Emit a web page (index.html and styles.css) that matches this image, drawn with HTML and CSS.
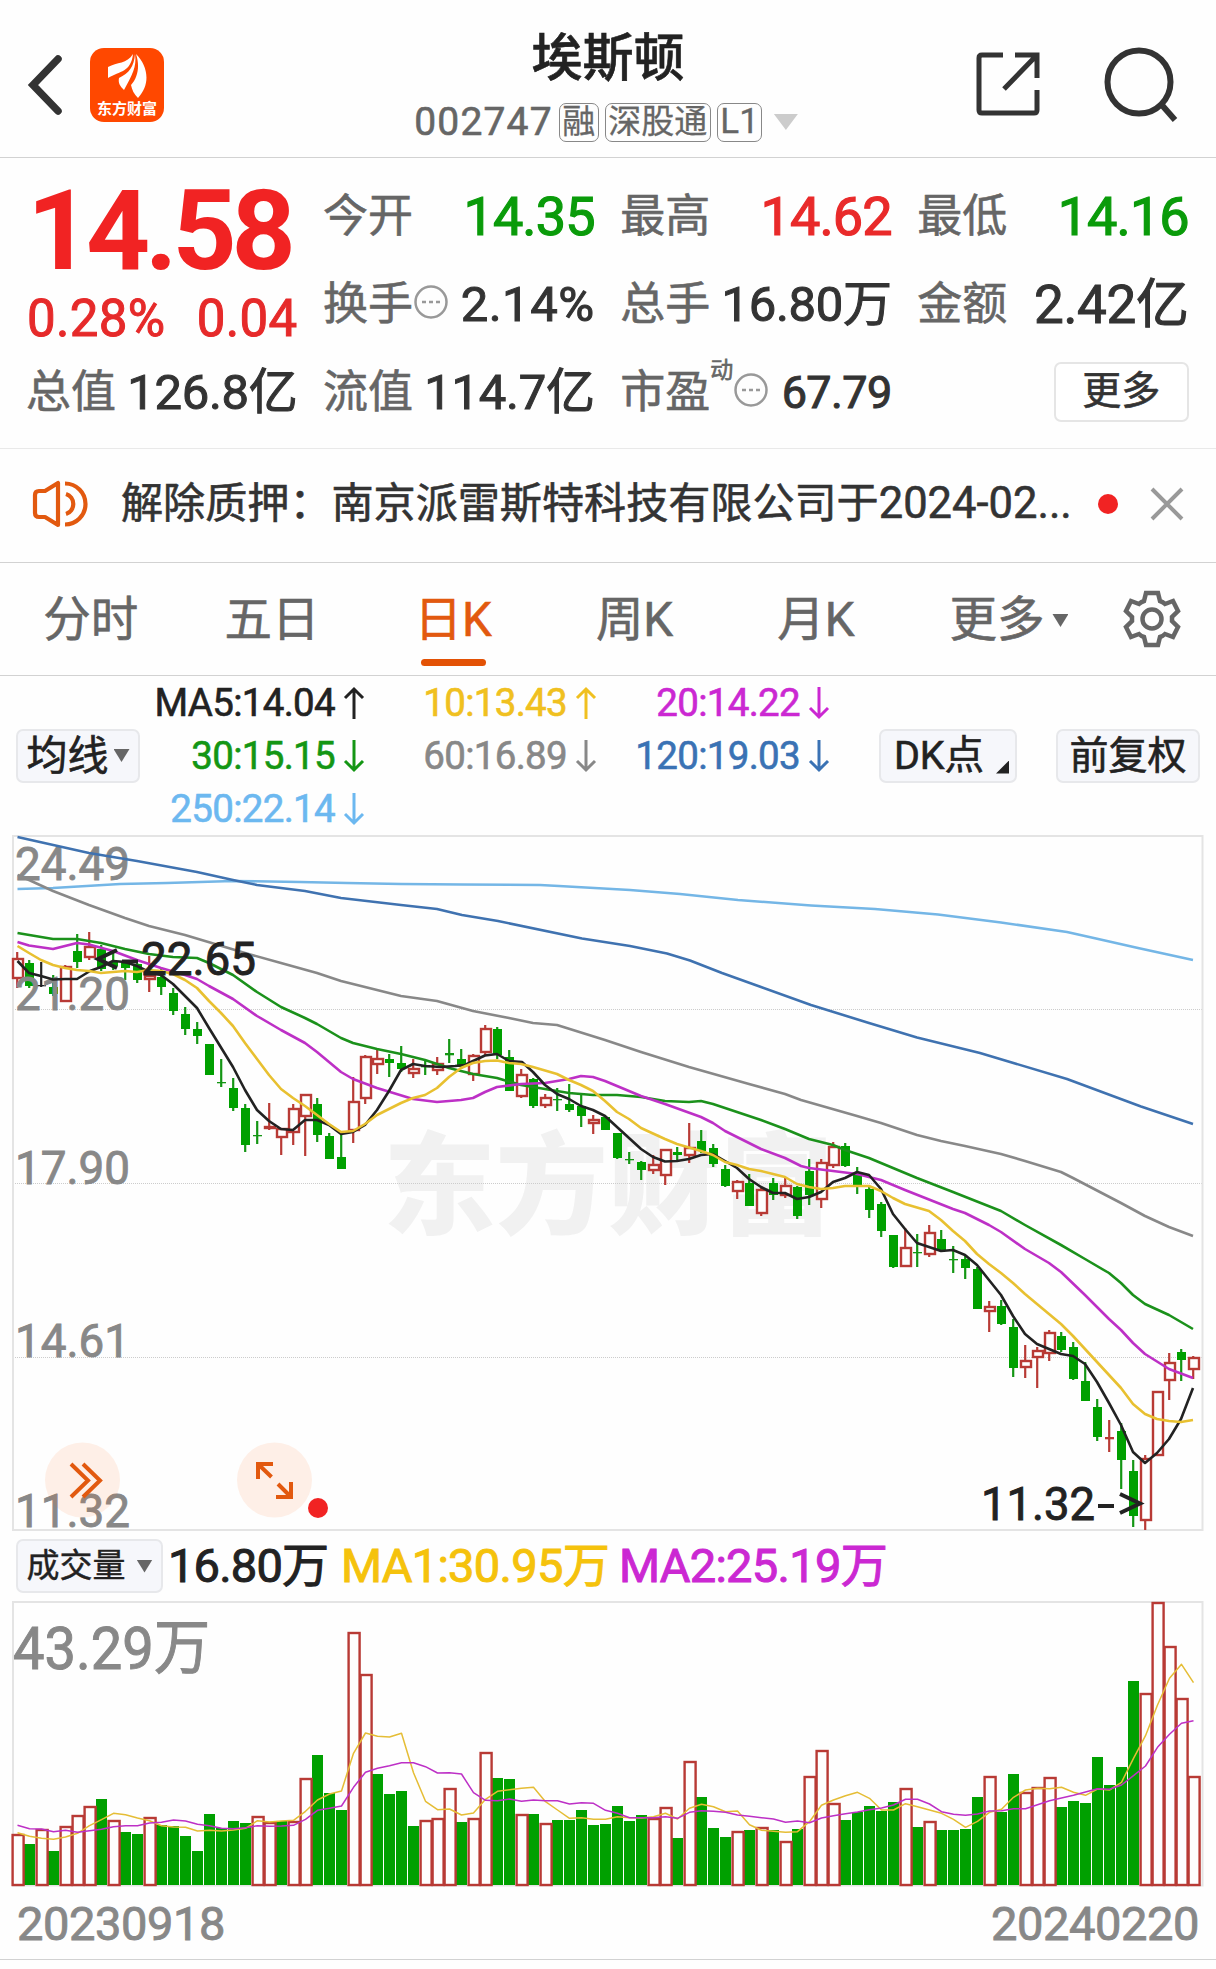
FILE: index.html
```html
<!DOCTYPE html>
<html lang="zh-CN">
<head>
<meta charset="utf-8">
<title>埃斯顿 002747</title>
<link rel="stylesheet" href="styles.css">
</head>
<body>
<header class="header">
  <div class="header-left">
    <svg class="back" width="40" height="64" viewBox="0 0 40 64"><path d="M34 6 9 32 34 58" fill="none" stroke="#333" stroke-width="7.5" stroke-linecap="round"/></svg>
    <div class="logo">
      <svg width="44" height="46" viewBox="0 0 44 46" fill="#fff"><path d="M3 15C12 10 22 12 28 2 26 20 15 19 3 26Z"/><path d="M30 2C32 15 27 23 19 38 15 34 13 31 14 26 24 21 29 15 30 2Z"/><path d="M31 2C43 14 46 32 33 46 29 42 27 38 26 33 33 25 35 14 31 2Z"/></svg>
      <span>东方财富</span>
    </div>
  </div>
  <div class="title">
    <h1>埃斯顿</h1>
    <div class="subtitle"><span class="code">002747</span><span class="tag">融</span><span class="tag">深股通</span><span class="tag tag-l1">L1</span><i class="caret"></i></div>
  </div>
  <div class="header-right">
    <svg width="66" height="66" viewBox="0 0 66 66" fill="none" stroke="#333" stroke-width="5"><path d="M28 4H7Q4 4 4 7V59Q4 62 7 62H59Q62 62 62 59V39M40 4H62V27M62 4 29 38"/></svg>
    <svg width="78" height="78" viewBox="0 0 78 78" fill="none" stroke="#333" stroke-width="6"><circle cx="38" cy="37" r="31.5"/><path d="M60 59 74 75"/></svg>
  </div>
</header>

<section class="quote">
  <div class="price-block">
    <div class="price">14.58</div>
    <div class="change"><span>0.28%</span><span>0.04</span></div>
  </div>
  <div class="stat"><span class="label">今开</span><span class="value down">14.35</span></div>
  <div class="stat"><span class="label">最高</span><span class="value up">14.62</span></div>
  <div class="stat"><span class="label">最低</span><span class="value down">14.16</span></div>
  <div class="stat"><span class="label">换手</span><svg class="info" width="34" height="34" viewBox="0 0 34 34"><circle cx="17" cy="17" r="15.5"/><path d="M8 17h4M15 17h4M22 17h4"/></svg><span class="value percent">2.14%</span></div>
  <div class="stat"><span class="label">总手</span><span class="value">16.80万</span></div>
  <div class="stat"><span class="label">金额</span><span class="value wide">2.42亿</span></div>
  <div class="stat"><span class="label">总值</span><span class="value">126.8亿</span></div>
  <div class="stat"><span class="label">流值</span><span class="value">114.7亿</span></div>
  <div class="stat pe"><span class="label">市盈</span><sup>动</sup><svg class="info" width="34" height="34" viewBox="0 0 34 34"><circle cx="17" cy="17" r="15.5"/><path d="M8 17h4M15 17h4M22 17h4"/></svg><span class="value small">67.79</span></div>
  <div class="stat"><button class="more">更多</button></div>
</section>

<section class="notice">
  <svg width="60" height="52" viewBox="0 0 60 52" fill="none" stroke="#e2590f" stroke-width="4.200" stroke-linejoin="round"><path d="M6 17Q6 13 10 13H16L29 5V47L16 39H10Q6 39 6 35Z"/><path d="M37 16A10.500 10.500 0 0 1 37 36M36 5.500A20.500 20.500 0 0 1 36 46.500"/></svg>
  <p>解除质押：南京派雷斯特科技有限公司于<span>2024<b>-</b>02...</span></p>
  <i class="dot"></i>
  <svg width="36" height="36" viewBox="0 0 36 36" stroke="#999" stroke-width="4"><path d="M3 3 33 33M33 3 3 33"/></svg>
</section>

<nav class="tabs">
  <a>分时</a><a>五日</a><a class="active">日K</a><a>周K</a><a>月K</a>
  <a class="tab-more">更多<i class="caret"></i></a>
  <svg class="gear" width="60" height="60" viewBox="0 0 60 60" fill="none" stroke="#666" stroke-width="4.500"><path d="M24 4H36L38 12Q41 13 43 15L51 12 56 22 50 28V32L56 38 51 48 43 45Q41 47 38 48L36 56H24L22 48Q19 47 17 45L9 48 4 38 10 32V28L4 22 9 12 17 15Q19 13 22 12Z"/><circle cx="30" cy="30" r="9.500"/></svg>
</nav>

<section class="averages">
  <button class="chip">均线<i class="caret"></i></button>
  <div class="ma-grid">
    <span class="ma5">MA5:14.04<svg viewBox="0 0 22 34"><path d="M11 33V3M2 12 11 3 20 12"/></svg></span>
    <span class="ma10">10:13.43<svg viewBox="0 0 22 34"><path d="M11 33V3M2 12 11 3 20 12"/></svg></span>
    <span class="ma20">20:14.22<svg viewBox="0 0 22 34"><path d="M11 1V31M2 22 11 31 20 22"/></svg></span>
    <span class="ma30">30:15.15<svg viewBox="0 0 22 34"><path d="M11 1V31M2 22 11 31 20 22"/></svg></span>
    <span class="ma60">60:16.89<svg viewBox="0 0 22 34"><path d="M11 1V31M2 22 11 31 20 22"/></svg></span>
    <span class="ma120">120:19.03<svg viewBox="0 0 22 34"><path d="M11 1V31M2 22 11 31 20 22"/></svg></span>
    <span class="ma250">250:22.14<svg viewBox="0 0 22 34"><path d="M11 1V31M2 22 11 31 20 22"/></svg></span>
  </div>
  <button class="chip chip-dk">DK点<i class="corner"></i></button>
  <button class="chip chip-fq">前复权</button>
</section>

<svg class="kline" width="1216" height="698" viewBox="0 834 1216 698">
  <g class="watermark"><text x="383" y="1226" textLength="450" lengthAdjust="spacingAndGlyphs">东方财富</text></g>
  <path class="grid" d="M13 1009.500H1202M13 1183.500H1202M13 1357.500H1202"/>
  <rect class="frame" x="13" y="836" width="1189.500" height="694"/>
  <g id="candles"></g>
  <g class="axis">
    <text x="15" y="880" textLength="115" lengthAdjust="spacingAndGlyphs">24.49</text>
    <text x="15" y="1010" textLength="115" lengthAdjust="spacingAndGlyphs">21.20</text>
    <text x="15" y="1184" textLength="115" lengthAdjust="spacingAndGlyphs">17.90</text>
    <text x="15" y="1357" textLength="115" lengthAdjust="spacingAndGlyphs">14.61</text>
    <text x="15" y="1527" textLength="115" lengthAdjust="spacingAndGlyphs">11.32</text>
  </g>
  <g id="lines"></g>
  <g class="fab">
    <circle cx="82.500" cy="1480" r="37.500"/><circle cx="274.500" cy="1480" r="37.500"/>
    <path d="M71 1464 88 1480.500 71 1497M83 1464 100 1480.500 83 1497M271.500 1477 258 1464M258 1479V1464H273M278 1484 291 1497M291 1482V1497H276"/>
  </g>
  <circle cx="318" cy="1508" r="10" fill="#f12323"/>
  <g class="mark">
    <path d="M117 950 98 959 117 968M122 961.500H138M1120 1494 1140 1503.500 1120 1513M1098 1506H1114"/>
    <text x="141" y="975" textLength="115" lengthAdjust="spacingAndGlyphs">22.65</text>
    <text x="981" y="1520" textLength="114" lengthAdjust="spacingAndGlyphs">11.32</text>
  </g>
</svg>

<section class="volume-bar">
  <button class="chip">成交量<i class="caret"></i></button>
  <span class="vol-now">16.80万</span><span class="vol-ma1">MA1:30.95万</span><span class="vol-ma2">MA2:25.19万</span>
</section>

<svg class="volume" width="1216" height="288" viewBox="0 1600 1216 288">
  <rect class="frame" x="13" y="1602" width="1189.500" height="283.500"/>
  <text class="vol-max" x="13" y="1669" textLength="197" lengthAdjust="spacingAndGlyphs">43.29万</text>
  <g id="bars"></g>
</svg>

<footer class="dates"><span>20230918</span><span>20240220</span></footer>
<script src="chart.js"></script>
</body>
</html>
```
FILE: styles.css
```css
* { box-sizing: border-box; }
body {
  margin: 0;
  width: 1216px;
  height: 1969px;
  overflow: hidden;
  background: #fefefe;
  color: #333;
  font-family: Roboto, "Noto Sans CJK SC", sans-serif;
  -webkit-text-stroke: .6px currentColor;
}
button { font: inherit; color: inherit; margin: 0; padding: 0; }
svg { flex: none; display: block; }

.caret {
  display: inline-block;
  width: 16px;
  height: 13px;
  background: #666;
  clip-path: polygon(0 0, 100% 0, 50% 100%);
}

/* Header */
.header {
  height: 158px;
  border-bottom: 1px solid #d2d2d2;
  display: grid;
  grid-template-columns: 400px 1fr 400px;
}
.header-left { display: flex; align-items: center; padding: 12px 0 0 24px; gap: 26px; }
.logo {
  width: 74px;
  height: 74px;
  border-radius: 14px;
  background: #ff4800;
  display: flex;
  flex-direction: column;
  align-items: center;
  padding-top: 4px;
}
.logo span { color: #fff; font-size: 15px; font-weight: 700; line-height: 18px; margin-top: 2px; white-space: nowrap; -webkit-text-stroke: 0; }
.title { display: flex; flex-direction: column; align-items: center; padding-top: 27px; }
.title h1 { margin: 0; font-size: 51px; line-height: 64px; font-weight: 500; color: #222; }
.subtitle { display: flex; align-items: center; margin: 11px 0 0 -4px; color: #666; white-space: nowrap; }
.code { font-size: 39px; line-height: 40px; letter-spacing: 1.2px; margin-right: 6px; }
.tag {
  height: 39px;
  border: 1.500px solid #888;
  border-radius: 7px;
  font-size: 33px;
  line-height: 35px;
  padding: 0 2.500px;
  margin-right: 6px;
  -webkit-text-stroke: .3px;
}
.tag-l1 { width: 45px; text-align: center; font-size: 35px; }
.subtitle .caret { width: 24px; height: 16px; background: #ccc; margin-left: 6px; }
.header-right { display: flex; justify-content: flex-end; align-items: center; gap: 60px; padding: 10px 37px 0 0; }

/* Quote */
.quote {
  height: 291px;
  border-bottom: 1px solid #e9e9e9;
  padding: 15px 27px 0;
  display: grid;
  grid-template-columns: repeat(4, 270.500px);
  grid-template-rows: repeat(3, 88px);
  column-gap: 26.600px;
}
.price-block { grid-row: span 2; color: #f12323; }
.price { font-size: 112px; font-weight: 700; line-height: 116px; letter-spacing: -5.200px; -webkit-text-stroke: 0; }
.change { display: flex; justify-content: space-between; font-size: 51px; line-height: 60px; color: #e62a2a; letter-spacing: .3px; -webkit-text-stroke: 1px; }
.stat { display: flex; align-items: center; white-space: nowrap; }
.label { font-size: 45px; line-height: 60px; color: #666; margin-left: -1px; }
.value { margin-left: auto; font-size: 49px; line-height: 60px; letter-spacing: -.3px; -webkit-text-stroke: 1px; }
.value.up, .value.down { font-size: 54px; letter-spacing: -.9px; -webkit-text-stroke: 1.200px; }
.value.percent { letter-spacing: .5px; }
.value.wide { font-size: 53px; }
.value.small { font-size: 45px; letter-spacing: -.6px; }
.up { color: #e92a2a; }
.down { color: #0a9b0a; }
.info { fill: none; stroke: #999; stroke-width: 2.500; margin: -6px 0 0 1px; }
.pe sup { font-size: 23px; line-height: 24px; color: #666; align-self: flex-start; margin: 10px 0 0; }
.more {
  margin: -2px 0 0 auto;
  width: 135px;
  height: 60px;
  border: 2px solid #e5e5e5;
  border-radius: 7px;
  background: #fff;
  font-size: 39px;
  line-height: 50px;
  padding-bottom: 3px;
}

/* Notice */
.notice { height: 114px; border-bottom: 1px solid #d2d2d2; display: flex; align-items: center; padding: 0 29px 3px 29px; }
.notice p { margin: 0 0 0 32px; width: 965px; font-size: 42.100px; line-height: 60px; white-space: nowrap; }
.notice p span { font-size: 43.500px; }
.notice b { font-weight: 400; }
.dot { width: 20px; height: 20px; border-radius: 50%; background: #f12323; margin: 0 31px 0 12px; }

/* Period tabs */
.tabs { height: 113px; border-bottom: 1px solid #d2d2d2; display: flex; align-items: center; color: #666; }
.tabs a { width: 181.300px; height: 112px; text-align: center; font-size: 47.500px; line-height: 114px; position: relative; }
.tabs .active { color: #e2590f; }
.active::after { content: ""; position: absolute; left: 58px; bottom: 9px; width: 65px; height: 7px; border-radius: 4px; background: #e35205; }
.tabs .tab-more { width: 216px; text-align: left; padding-left: 43px; }
.tab-more .caret { margin: 0 0 9px 8px; }

/* Moving averages */
.averages { height: 158px; display: flex; align-items: center; padding: 1px 16px 0; }
.chip {
  height: 54px;
  border: 2px solid #e7e8eb;
  border-radius: 7px;
  background: #f6f7fb;
  color: #222;
  font-size: 41px;
  line-height: 48px;
  display: flex;
  align-items: center;
  justify-content: center;
  flex: none;
  white-space: nowrap;
}
.averages .chip { width: 124px; }
.chip .caret { margin-left: 5px; }
.averages .chip-dk { width: 138px; margin-left: auto; position: relative; padding-right: 18px; font-size: 39.500px; }
.averages .chip-fq { width: 144px; margin-left: 39px; font-size: 39px; }
.corner { position: absolute; right: 6px; bottom: 7px; width: 13px; height: 13px; background: #222; clip-path: polygon(100% 0, 100% 100%, 0 100%); }
.ma-grid {
  display: grid;
  grid-template-columns: 225px 232px 233px;
  grid-template-rows: repeat(3, 53px);
  flex: none;
}
.ma-grid span { display: flex; align-items: center; justify-content: flex-end; font-size: 38.500px; letter-spacing: -.7px; }
.ma-grid svg { width: 22px; height: 34px; margin-left: 8px; fill: none; stroke: currentColor; stroke-width: 3; }
.ma5 { color: #222; } .ma10 { color: #f0c020; } .ma20 { color: #cb28d2; } .ma30 { color: #149614; }
.ma60 { color: #888; } .ma120 { color: #3a72b4; } .ma250 { color: #6cb8f0; }

/* Charts */
svg text { -webkit-text-stroke: 0; }
.frame { fill: none; stroke: #e4e4e4; stroke-width: 2; }
.grid { stroke: #ccc; stroke-width: 1; stroke-dasharray: 1 1; }
.watermark { font-size: 111px; font-weight: 900; fill: #f1f1f1; }
.axis { font-size: 47px; fill: #888; stroke: #888; stroke-width: .9; }
.mark { font-size: 47px; fill: #222; stroke: #222; stroke-width: .9; }
.mark path { fill: none; stroke: #222; stroke-width: 4; }
.fab circle { fill: rgba(255, 105, 30, .1); }
.fab path { fill: none; stroke: #e2590f; stroke-width: 4; }
.vol-max { font-size: 60px; fill: #888; stroke: #888; stroke-width: 1; }
.line { fill: none; stroke-width: 2.600; stroke-linejoin: round; }
.thin { stroke-width: 1.500; }
.rise { stroke: #b83a35; fill: #fefefe; stroke-width: 2.400; }
.fall { stroke: none; fill: #00a000; }
.wick { stroke-width: 2.200; }

/* Volume header */
.volume-bar { height: 68px; display: flex; align-items: center; padding-left: 16px; font-size: 47px; white-space: nowrap; -webkit-text-stroke: 1px; }
.volume-bar .chip { width: 147px; font-size: 33px; -webkit-text-stroke: .4px; }
.volume-bar .chip .caret { margin-left: 11px; }
.volume-bar span { line-height: 60px; }
.vol-now { margin-left: 5px; color: #222; width: 173px; letter-spacing: -.8px; }
.vol-ma1 { color: #f5c20c; width: 278px; letter-spacing: -.7px; }
.vol-ma2 { color: #cb28d2; letter-spacing: -.7px; }

.dates { height: 72px; border-bottom: 1px solid #d2d2d2; display: flex; justify-content: space-between; padding: 0 17px; font-size: 47px; line-height: 71px; color: #888; letter-spacing: -.4px; -webkit-text-stroke: .9px; }
```
FILE: chart.js
```js
const NS = 'http://www.w3.org/2000/svg';
const STEP = 12, X0 = 17.5;
const add = (parent, tag, attrs) => {
  const el = document.createElementNS(NS, tag);
  for (const k in attrs) el.setAttribute(k, attrs[k]);
  parent.appendChild(el);
};

// Daily candles: direction, high, body top, body bottom, low
const candles = `r952,958,979,988 g960,963,986,988 k962,985,986,987 g975,987,994,996 r965,966,1002,1002 g934,951,962,968 r932,946,958,960 g945,949,969,971 g952,962,966,970 g961,963,968,980
g963,964,980,983 r956,975,980,992 g968,977,987,995 g988,993,1011,1015 g1007,1014,1029,1035 g1022,1029,1036,1044 g1044,1044,1075,1075 g1059,1082,1083,1087 g1078,1088,1108,1111 g1104,1108,1145,1152
g1121,1135,1136,1144 r1103,1126,1129,1130 r1128,1128,1138,1155 r1104,1108,1133,1145 r1094,1094,1117,1156 g1098,1104,1135,1142 g1133,1136,1159,1159 g1133,1157,1169,1169 r1077,1101,1131,1143 r1055,1056,1099,1104
r1050,1058,1065,1074 g1054,1059,1063,1077 g1046,1063,1069,1072 r1059,1068,1074,1078 g1061,1066,1067,1075 r1057,1063,1071,1075 g1039,1053,1055,1063 g1049,1059,1067,1069 r1054,1055,1075,1081 r1025,1028,1053,1055
g1027,1029,1055,1059 g1050,1057,1091,1091 r1069,1074,1097,1098 g1078,1079,1106,1108 r1094,1097,1106,1108 g1088,1099,1100,1111 g1084,1104,1110,1112 g1094,1106,1116,1127 r1115,1119,1124,1134 g1116,1117,1130,1130
g1133,1133,1158,1159 g1152,1159,1160,1164 g1161,1162,1170,1180 r1155,1164,1171,1174 r1149,1149,1176,1185 g1147,1152,1155,1160 r1123,1147,1156,1163 g1130,1141,1151,1153 g1144,1148,1164,1167 g1165,1169,1186,1187
r1180,1181,1192,1199 g1174,1183,1206,1206 r1188,1189,1214,1216 g1178,1183,1195,1200 r1178,1185,1196,1198 g1186,1187,1216,1219 g1159,1171,1195,1205 r1159,1162,1200,1208 r1142,1146,1166,1168 g1143,1146,1166,1167
g1167,1174,1186,1194 g1187,1189,1210,1218 g1202,1204,1231,1237 g1235,1235,1267,1268 r1228,1247,1267,1267 g1234,1252,1253,1267 r1225,1232,1255,1257 g1230,1239,1251,1251 g1246,1259,1260,1273 g1255,1259,1268,1279
g1267,1269,1309,1309 r1301,1306,1312,1332 g1300,1306,1324,1325 g1319,1327,1368,1377 r1345,1360,1368,1378 r1347,1350,1358,1388 r1330,1332,1354,1361 g1332,1336,1350,1352 g1342,1347,1379,1380 g1362,1381,1401,1401
g1399,1407,1437,1441 r1420,1437,1439,1452 g1423,1431,1460,1489 g1460,1471,1516,1527 r1455,1458,1521,1530 r1391,1391,1456,1456 r1353,1362,1381,1400 g1349,1352,1360,1381 r1356,1357,1370,1379`.split(/\s+/);

const cg = document.getElementById('candles');
candles.forEach((c, i) => {
  const [hi, top, bot, lo] = c.slice(1).split(',').map(Number);
  const x = X0 + STEP * i, up = c[0] === 'r';
  const color = up ? '#b83a35' : c[0] === 'k' ? '#222' : '#149614';
  add(cg, 'path', { d: `M${x - .3} ${hi}V${lo}`, class: 'wick', stroke: color });
  if (bot - top < 3) add(cg, 'rect', { x: x - 4.5, y: top, width: 9, height: bot - top + .3, fill: color });
  else if (up) add(cg, 'rect', { x: x - 4.5, y: top + 1, width: 10, height: bot - top - 2, class: 'rise' });
  else add(cg, 'rect', { x: x - 4.5, y: top, width: 9, height: bot - top, class: 'fall' });
});

// Moving averages as x,y points
const averages = [
  ['#74b6e6', '17.5,889 53,888 120,884 167,883 233,881 300,882 347,883 401,884 462,884.5 540,885 559,886 630,890 680,894 738,900 811,905.5 875,909 938,914.5 1001,922.5 1067,932 1096,938.5 1138,948 1193,960'],
  ['#3f72b0', '17.5,837 89,853 137,861 197,872 233,880 257,885 305,891 341,898 401,905 437,909 462,915 498,921 582,938.5 630,946 667,953.5 690,960.5 722,973 761,987 811,1005 869,1023 917,1037.5 980,1053 1067,1079 1141,1106.5 1193,1124'],
  ['#888', '17.5,875 29,880 53,891 89,905 125,918 149,926 185,935 245,953 281,963 317,973 341,981 365,987 401,996 437,1001 473,1011 509,1018 533,1023 557,1025 605,1040 641,1052 689,1067 749,1084 785,1094 801,1100 857,1116 881,1123 917,1135 941,1141 965,1146 1001,1154 1025,1161 1061,1172 1073,1178 1121,1203 1145,1216 1169,1227 1193,1236'],
  ['#1b911b', '17.5,933 53,939 77,939 101,943 125,949 149,954 173,957 197,958 209,963 233,975 257,992 281,1007 305,1018 317,1024 341,1038 353,1043 377,1049 401,1054 425,1060 449,1068 473,1074 497,1078 521,1085 545,1089 569,1093 593,1095 617,1095 641,1097 665,1101 689,1102 701,1101 713,1104 737,1112 761,1120 785,1129 809,1139 833,1145 845,1150 869,1158 893,1168 917,1178 953,1192 1001,1211 1025,1225 1061,1245 1085,1259 1109,1273 1121,1283 1133,1295 1145,1304 1169,1315 1193,1329'],
  ['#bd30c6', '17.5,942 29,945.5 53,949 65,946 77,943 89,944.5 113,951 137,960 161,968 185,975 197,979 209,986 233,999 257,1016 281,1030 305,1043 317,1052 341,1072 353,1079 377,1088 413,1099 425,1100.5 437,1102 461,1100 473,1098 485,1092 497,1087 521,1084 545,1083 569,1079 581,1076 593,1077 605,1081 641,1096 665,1104 701,1117 713,1123 725,1131 761,1149 785,1158 801,1166 809,1168 857,1174 881,1180 905,1190 953,1209 965,1213 977,1219 989,1225 1001,1232 1025,1249 1049,1263 1061,1272 1085,1295 1109,1319 1121,1330 1133,1343 1145,1354 1169,1369 1193,1378'],
  ['#222', '17.5,961 29,973 41,976 53,979.5 65,979 77,979 90,971 101,967 113,961 125,962 137,966 149,972 161,975 173,984 197,1008 209,1028 233,1067 245,1090 257,1110 269,1121 281,1129 293,1130 305,1120 317,1120 329,1125 341,1134 353,1132 365,1125 377,1110 389,1091 401,1070 413,1064 425,1066 441,1067 455,1066 465,1065 473,1061 485,1055.5 497,1054 509,1061 522,1062 533,1072 545,1085 557,1094 569,1099 581,1106 593,1110 605,1116 617,1127 641,1149 653,1157 665,1161.5 677,1161 689,1159 701,1155 713,1154 725,1161 737,1168 749,1179 761,1187 773,1193 785,1193 797,1199 809,1197 821,1192 833,1182 845,1178 857,1172 869,1175 881,1189 893,1214 905,1229 917,1243 929,1247 941,1251 953,1250 965,1255 977,1265 989,1280 1001,1295 1013,1316 1025,1334 1037,1344 1049,1349 1061,1354 1073,1356 1085,1364 1097,1382 1109,1403 1121,1425 1133,1452 1145,1463 1157,1453 1169,1439 1181,1419 1193,1388'],
  ['#e8c030', '17.5,946 29,953 41,960 53,965 65,968 77,970 89,971 101,973 113,972 125,971 137,972 149,970 161,971 173,974 185,980 197,988 209,1001 221,1013 233,1026 245,1043 257,1059 269,1075 281,1089 293,1098 305,1106 317,1115 329,1124 341,1132 353,1131 365,1124 377,1115 401,1103 413,1098 425,1095 437,1088 449,1077 461,1068 473,1063 485,1061 497,1060.5 509,1063 521,1064 533,1067 557,1074 569,1080 581,1085 593,1091 605,1101 617,1112 629,1119 641,1128 665,1139 677,1144 701,1151 713,1155 725,1162 737,1165 749,1169 761,1171 773,1174 785,1177 797,1184 809,1187 821,1189 833,1188 845,1186 869,1186 881,1191 893,1198 905,1204 929,1211 941,1220 953,1231 965,1241 977,1254 989,1264 1001,1273 1013,1283 1025,1294 1061,1324 1073,1336 1085,1349 1121,1388 1133,1404 1145,1414 1157,1419 1169,1421 1181,1422 1193,1420']
];
const lg = document.getElementById('lines');
averages.forEach(([stroke, points]) => add(lg, 'polyline', { points, stroke, class: 'line' }));

// Volume bars: direction and bar top
const volumes = `r1834 g1844 r1829 g1851 r1826 r1815 r1806 g1799 r1820 g1832 g1834 r1817 g1825 g1826 g1836 g1851 g1814 g1828 g1821 g1823 r1816 r1822 g1821 r1821 r1778 g1755 g1793 g1810 r1632 r1674 g1774 g1794 g1791
g1826 r1820 r1818 r1788 g1822 r1818 r1752 g1778 g1779 r1814 g1814 r1823 g1820 g1820 g1810 g1825 g1824 g1806 g1821 g1815 r1818 r1807 g1838 r1761 g1797 g1828 g1837 r1831 g1830 r1827 g1830 r1841 g1829
r1776 r1750 r1803 g1820 g1812 g1806 g1811 g1802 r1788 g1827 r1821 g1830 g1830 g1829 g1797 r1776 g1812 g1774 r1792 r1787 r1777 g1807 g1801 g1803 g1757 g1785 g1767 g1681 r1693 r1602 r1646 r1698 r1776`.split(/\s+/);
const bg = document.getElementById('bars');
['g', 'r'].forEach(pass => volumes.forEach((v, i) => {
  if (v[0] !== pass) return;
  const y = +v.slice(1), x = X0 + STEP * i;
  if (pass === 'r') add(bg, 'rect', { x: x - 4.9, y: y + 1, width: 11, height: 1884 - y, class: 'rise' });
  else add(bg, 'rect', { x: x - 5.5, y, width: 11, height: 1885 - y, class: 'fall' });
}));

// Volume averages, in thirds of a pixel below 1590
const volumeAverages = [
  ['#e5bd35', [728,739,745,748,741,730,707,689,670,674,684,692,707,711,712,723,721,723,720,715,692,696,693,691,664,630,612,603,490,429,439,441,430,548,634,659,657,675,669,628,604,599,595,592,635,660,685,683,688,688,680,683,684,680,670,687,655,643,650,665,663,704,721,724,727,725,695,646,630,617,607,625,660,660,641,650,660,670,688,712,694,667,658,622,600,595,596,592,607,616,597,600,577,505,437,345,265,223,278]],
  ['#bd30c6', [706,716,717,725,721,727,722,718,710,707,707,699,697,690,693,703,707,715,716,713,707,709,708,706,688,661,655,648,592,547,535,527,518,518,530,549,548,552,608,631,632,627,634,630,632,632,642,638,640,661,670,683,683,683,680,685,667,662,664,667,675,679,683,687,697,693,698,684,677,671,666,659,654,645,628,628,642,665,673,676,672,663,662,656,656,644,632,624,616,606,596,598,585,557,528,472,433,400,392]]
];
volumeAverages.forEach(([stroke, ys]) => add(bg, 'polyline', {
  points: ys.map((v, i) => `${X0 + STEP * i},${(1590 + v / 3).toFixed(1)}`).join(' '), stroke, class: 'line thin'
}));
```
